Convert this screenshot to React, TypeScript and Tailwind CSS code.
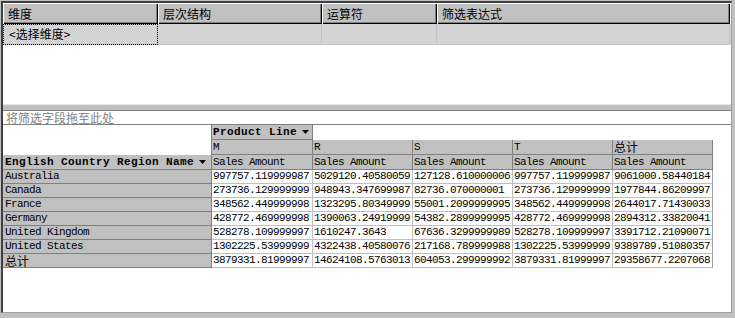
const cjk = "font-['Noto_Sans_CJK_SC','Noto_Sans',sans-serif] text-[12px]";
const mono =
  "font-['Liberation_Mono','Noto_Sans_CJK_SC',monospace] text-[11px] tracking-[-0.6px]";
const monoBold =
  "font-['Liberation_Mono','Noto_Sans_CJK_SC',monospace] text-[11px] font-bold tracking-[0.4px]";

const filterCols = [
  { label: "维度", w: "w-[155px]" },
  { label: "层次结构", w: "w-[164px]" },
  { label: "运算符", w: "w-[115px]" },
  { label: "筛选表达式", w: "w-[293px]" },
];

const colHeads = ["M", "R", "S", "T", "总计"];
const colW = ["w-[101px]", "w-[100px]", "w-[100px]", "w-[100px]", "w-[100px]"];

const rows: [string, string[]][] = [
  ["Australia", ["997757.119999987", "5029120.40580059", "127128.610000006", "997757.119999987", "9061000.58440184"]],
  ["Canada", ["273736.129999999", "948943.347699987", "82736.070000001", "273736.129999999", "1977844.86209997"]],
  ["France", ["348562.449999998", "1323295.80349999", "55001.2099999995", "348562.449999998", "2644017.71430033"]],
  ["Germany", ["428772.469999998", "1390063.24919999", "54382.2899999995", "428772.469999998", "2894312.33820041"]],
  ["United Kingdom", ["528278.109999997", "1610247.3643", "67636.3299999989", "528278.109999997", "3391712.21090071"]],
  ["United States", ["1302225.53999999", "4322438.40580076", "217168.789999988", "1302225.53999999", "9389789.51080357"]],
  ["总计", ["3879331.81999997", "14624108.5763013", "604053.299999992", "3879331.81999997", "29358677.2207068"]],
];

function Caret() {
  return (
    <svg width="7" height="4" viewBox="0 0 7 4" className="ml-[5px] shrink-0">
      <path d="M0 0h7L3.5 4z" fill="#000" />
    </svg>
  );
}

export default function App() {
  return (
    <div className="h-[318px] w-[735px] overflow-hidden bg-[#c0c0c0] text-black">
      <div className="ml-px mt-px flex h-[312px] w-[731px] flex-col border-l-2 border-t-2 border-r border-b border-l-[#404040] border-t-[#404040] border-r-[#a0a0a0] border-b-[#a0a0a0]">
        {/* filter grid */}
        <div className="h-[101px] shrink-0 bg-white">
          <div className="flex h-[21px]">
            {filterCols.map((c) => (
              <div
                key={c.label}
                className={`${c.w} ${cjk} flex items-center bg-[#c0c0c0] pl-[5px] leading-none shadow-[inset_1px_1px_#fff,inset_-1px_-1px_#000,inset_-2px_-2px_#808080]`}
              >
                {c.label}
              </div>
            ))}
          </div>
          <div className="flex h-[21px] bg-[#d4d4d4]">
            {filterCols.map((c, i) => (
              <div
                key={c.label}
                className={`${c.w} ${cjk} flex items-center border-b border-r border-[#c4c4c4] leading-none ${
                  i === 0 ? "border-r-[#c4c4c4] pl-[6px] outline-1 outline-dotted outline-offset-[-1px] outline-black" : ""
                }`}
              >
                {i === 0 ? "<选择维度>" : ""}
              </div>
            ))}
          </div>
        </div>

        <div className="h-[6px] shrink-0 border-t border-[#e8e8e8] bg-[#c0c0c0]" />

        {/* pivot area */}
        <div className="flex-1 border-t border-[#808080] bg-white">
          <div className={`${cjk} h-[14px] border-b border-[#808080] pl-[3px] leading-[13px] text-[#808080]`}>
            将筛选字段拖至此处
          </div>

          <div className="flex h-[15px]">
            <div className="w-[209px] border-r border-[#808080]" />
            <div className={`${monoBold} flex w-[101px] items-center border-b border-r border-[#808080] bg-[#c0c0c0] pl-px leading-none`}>
              Product Line
              <Caret />
            </div>
          </div>

          <div className="flex h-[15px]">
            <div className="w-[209px] border-r border-[#808080]" />
            {colHeads.map((h, i) => (
              <div
                key={h}
                className={`${colW[i]} ${h === "总计" ? cjk : mono} flex items-center border-b border-r border-[#808080] bg-[#c0c0c0] pl-px leading-none`}
              >
                {h}
              </div>
            ))}
          </div>

          <div className="flex h-[15px]">
            <div className={`${monoBold} flex w-[209px] items-center border-b border-r border-[#808080] bg-[#c0c0c0] pl-[2px] leading-none`}>
              English Country Region Name
              <Caret />
            </div>
            {colHeads.map((h, i) => (
              <div
                key={h}
                className={`${colW[i]} ${mono} flex items-center border-b border-r border-[#808080] bg-[#c0c0c0] pl-px leading-none`}
              >
                Sales Amount
              </div>
            ))}
          </div>

          {rows.map(([name, vals]) => (
            <div key={name} className="flex h-[14px]">
              <div
                className={`${name === "总计" ? cjk : mono} flex w-[209px] items-center border-b border-r border-[#808080] bg-[#c0c0c0] pl-[2px] leading-none`}
              >
                {name}
              </div>
              {vals.map((v, i) => (
                <div
                  key={i}
                  className={`${colW[i]} ${mono} flex items-center border-b border-r border-[#c0c0c0] pl-px leading-none ${
                    i === 4 ? "border-r-[#a0a0a0]" : ""
                  }`}
                >
                  {v}
                </div>
              ))}
            </div>
          ))}
        </div>
      </div>
    </div>
  );
}
